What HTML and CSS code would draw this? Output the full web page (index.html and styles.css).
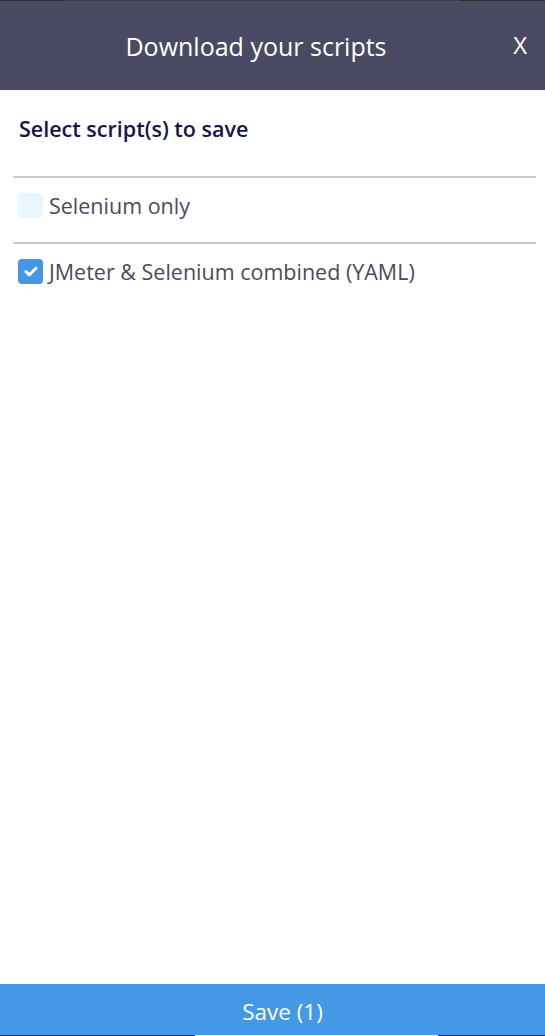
FILE: index.html
```html
<!DOCTYPE html>
<html>
<head>
<meta charset="utf-8">
<link rel="stylesheet" href="styles.css">
</head>
<body>
<div class="modal">
  <div class="topline"><span class="tl-a"></span><span class="tl-b"></span><span class="tl-c"></span></div>
  <header class="header">
    <h1 class="title">Download your scripts</h1>
    <button class="close">X</button>
  </header>
  <main class="content">
    <h2 class="subtitle">Select script(s) to save</h2>
    <ul class="options">
      <li class="option">
        <span class="check"></span>
        <span class="label">Selenium only</span>
      </li>
      <li class="option">
        <span class="check checked">
          <svg viewBox="0 0 14 11" width="14" height="11"><path d="M2 5.6l3.4 3.2L12 2.2" fill="none" stroke="#fff" stroke-width="3" stroke-linecap="round" stroke-linejoin="round"/></svg>
        </span>
        <span class="label">JMeter &amp; Selenium combined (YAML)</span>
      </li>
    </ul>
  </main>
  <footer class="footer">
    <button class="save">Save (1)</button>
    <div class="bottomline"><span class="bl-a"></span><span class="bl-b"></span><span class="bl-c"></span></div>
  </footer>
</div>
</body>
</html>
```
FILE: styles.css
```css
* { box-sizing: border-box; }
html, body { margin: 0; padding: 0; background: #fff; }
body { font-family: "Open Sans", "Noto Sans", sans-serif; }

.modal {
  width: 545px;
  height: 1036px;
  display: flex;
  flex-direction: column;
}

.topline { display: flex; height: 1px; }
.topline span { display: block; height: 1px; }
.tl-a { width: 62px; background: #2c2c2c; }
.tl-b { width: 398px; background: #3d3c4a; }
.tl-c { flex: 1; background: #2c2c2c; }

.header {
  height: 89px;
  background: #4a4a62;
  display: flex;
  align-items: center;
  justify-content: center;
  position: relative;
}
.title {
  margin: 0 33px 0 0;
  font-weight: 400;
  font-size: 25px;
  color: #ffffff;
}
.close {
  position: absolute;
  right: 18px;
  top: 29px;
  background: none;
  border: 0;
  padding: 0;
  color: #fff;
  font-family: "Open Sans", sans-serif;
  font-size: 24px;
  line-height: 30px;
}

.content {
  flex: 1;
  padding: 0 9px 0 13px;
}
.subtitle {
  margin: 0;
  padding: 25px 0 0 6px;
  height: 86px;
  font-size: 21.5px;
  font-weight: 600;
  color: #17164a;
  line-height: 28px;
}
.options { list-style: none; margin: 0; padding: 0; }
.option {
  border-top: 2px solid #cbcbcb;
  height: 66px;
  padding: 15px 0 0 5px;
  display: flex;
  align-items: flex-start;
  gap: 6px;
}
.check {
  width: 25px;
  height: 25px;
  border-radius: 4px;
  background: #eaf6fe;
  display: flex;
  align-items: center;
  justify-content: center;
  flex: none;
}
.check.checked { background: #4496e6; }
.label {
  font-size: 21.5px;
  color: #4b4a62;
  line-height: 23px;
  padding-top: 1px;
}

.footer { display: flex; flex-direction: column; }
.save {
  height: 51px;
  border: 0;
  background: #4498e6;
  color: #fff;
  font-family: "Open Sans", sans-serif;
  font-size: 22.5px;
  padding: 3px 0 0 20px;
}
.bottomline { display: flex; height: 1px; }
.bottomline span { display: block; height: 1px; }
.bl-a { width: 195px; background: #333; }
.bl-b { width: 243px; background: #f4f4f4; }
.bl-c { flex: 1; background: #333; }
```
